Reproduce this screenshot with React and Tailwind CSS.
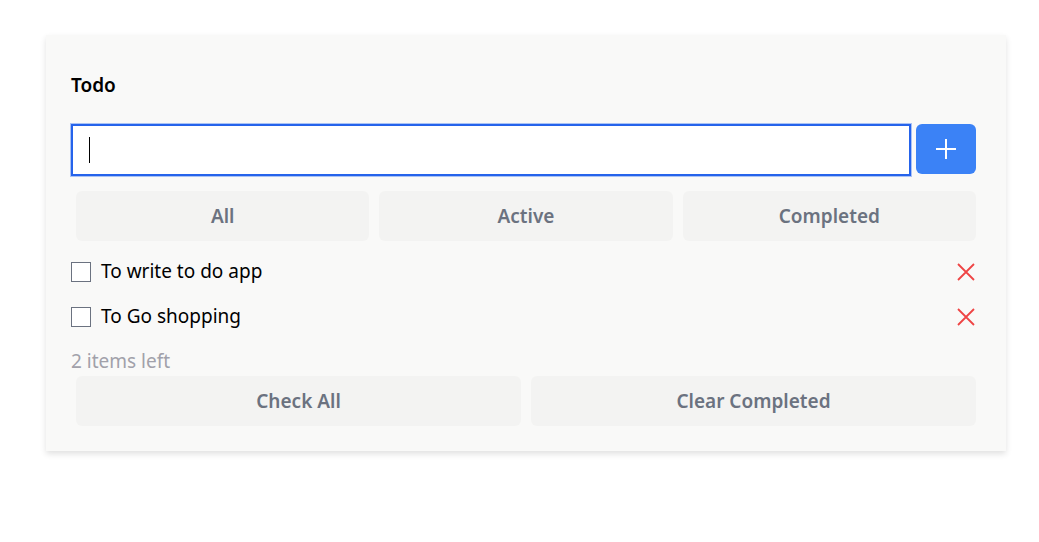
import React, { useState } from "react";

const font = { fontFamily: '"Noto Sans", "Open Sans", sans-serif' };

const XIcon = () => (
  <svg width="18" height="18" viewBox="0 0 18 18" fill="none" stroke="#ef4444" strokeWidth="1.8">
    <path d="M1 1 L17 17 M17 1 L1 17" />
  </svg>
);

export default function App() {
  const [todos] = useState([
    { id: 1, text: "To write to do app" },
    { id: 2, text: "To Go shopping" },
  ]);

  return (
    <div className="min-h-[542px] bg-white pt-[35px] pl-[46px] pr-[33px]" style={font}>
      <div className="bg-[#f9f9f8] shadow-[0_3px_6px_rgba(0,0,0,0.12)] pl-[25px] pr-[30px] pt-[38px] pb-[25px]">
        {/* Title */}
        <h1 className="text-[19px] font-semibold text-black leading-[24px]">Todo</h1>

        {/* Input row */}
        <div className="flex items-start gap-[5px] mt-[27px]">
          <div className="flex-1 h-[52px] border-2 border-[#2563eb] outline outline-1 outline-[#a9c2f5] bg-white flex items-center pl-[16px]">
            <div className="w-px h-[26px] bg-black" />
          </div>
          <button className="w-[60px] h-[50px] rounded-md bg-[#3b82f6] flex items-center justify-center">
            <svg width="20" height="20" viewBox="0 0 20 20" stroke="white" strokeWidth="2">
              <path d="M10 0 V20 M0 10 H20" />
            </svg>
          </button>
        </div>

        {/* Filters */}
        <div className="grid grid-cols-3 gap-[10px] pl-[5px] mt-[15px]">
          {["All", "Active", "Completed"].map((f) => (
            <button
              key={f}
              className="h-[50px] rounded-md bg-[#f3f3f2] text-[19px] font-semibold text-[#6b7280]"
            >
              {f}
            </button>
          ))}
        </div>

        {/* Todo list */}
        <div className="mt-[8px]">
          {todos.map((t) => (
            <div key={t.id} className="flex items-center h-[45px]">
              <div className="w-[20px] h-[20px] border border-[#6b7280] bg-white" />
              <span className="ml-[10px] text-[19px] text-black">{t.text}</span>
              <span className="ml-auto mr-[1px] flex">
                <XIcon />
              </span>
            </div>
          ))}
        </div>

        <p className="text-[19px] text-[#a1a1aa] leading-[24px] mt-[10px]">2 items left</p>

        {/* Bottom actions */}
        <div className="grid grid-cols-2 gap-[10px] pl-[5px] mt-[3px]">
          <button className="h-[50px] rounded-md bg-[#f3f3f2] text-[19px] font-semibold text-[#6b7280]">
            Check All
          </button>
          <button className="h-[50px] rounded-md bg-[#f3f3f2] text-[19px] font-semibold text-[#6b7280]">
            Clear Completed
          </button>
        </div>
      </div>
    </div>
  );
}
